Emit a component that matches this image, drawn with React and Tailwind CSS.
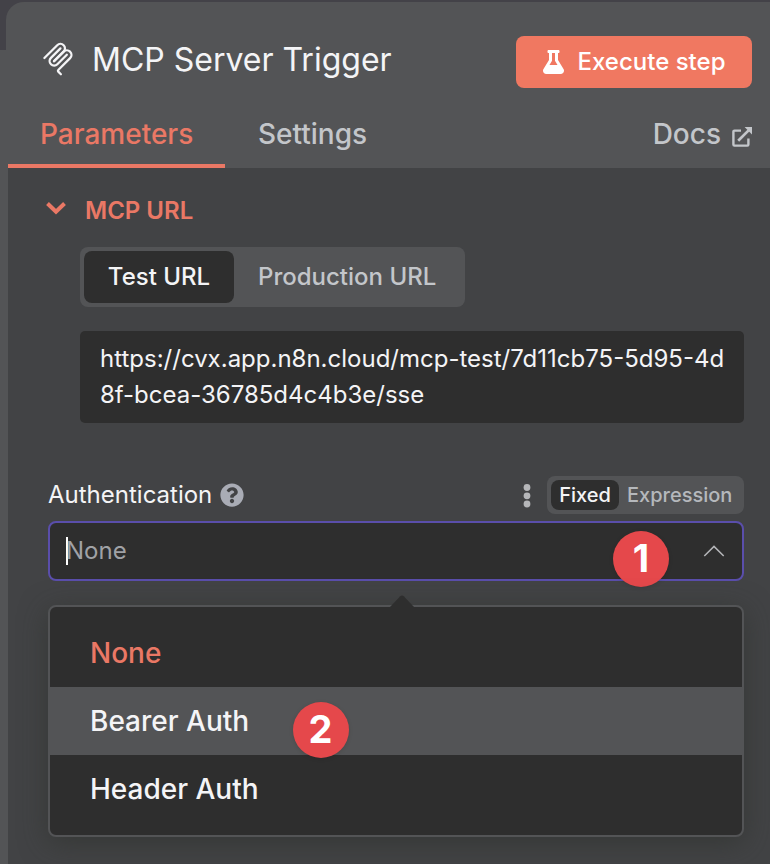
import React from "react";
import { FaFlask, FaQuestionCircle } from "react-icons/fa";

function McpIcon() {
  return (
    <svg viewBox="0 0 180 180" className="h-[34px] w-[34px] shrink-0" fill="none" stroke="#f4f4f6" strokeWidth="12" strokeLinecap="round">
      <path d="M18 84.85L85.88 16.97C95.25 7.6 110.45 7.6 119.82 16.97C129.2 26.34 129.2 41.54 119.82 50.91L68.56 102.18" />
      <path d="M69.27 101.47L119.82 50.91C129.2 41.54 144.39 41.54 153.77 50.91L154.12 51.27C163.49 60.64 163.49 75.83 154.12 85.21L92.72 146.6C89.6 149.72 89.6 154.79 92.72 157.91L105.33 170.52" />
      <path d="M102.85 33.94L52.65 84.15C43.28 93.52 43.28 108.71 52.65 118.09C62.02 127.46 77.22 127.46 86.59 118.09L136.79 67.88" />
    </svg>
  );
}

function ExternalLinkIcon() {
  return (
    <svg viewBox="0 0 20 20" className="mt-[5px] h-5 w-5 shrink-0" fill="none" stroke="#c3c6ca" strokeWidth="2.4">
      <path d="M9 3.6H2.4a1 1 0 0 0-1 1v13a1 1 0 0 0 1 1h13a1 1 0 0 0 1-1V11.5" />
      <path d="M6.2 13.8L16.6 3.4" strokeWidth="2.7" />
      <path d="M12.6 0H20V7.4Z" fill="#c3c6ca" stroke="none" />
    </svg>
  );
}

function Badge({ children, className }) {
  return (
    <div className={`absolute flex h-14 w-14 items-center justify-center rounded-full bg-[#e5484b] pb-[2px] text-[38px] leading-none font-bold text-white shadow-[0_1px_4px_rgba(0,0,0,0.12)] ${className}`}>
      {children}
    </div>
  );
}

export default function App() {
  return (
    <div className="flex h-[864px] w-[770px] flex-col overflow-hidden bg-[linear-gradient(to_bottom,#434248_50px,#535456_50px)] pt-[2px] font-['Inter',sans-serif] text-[#f4f4f6]">
      <header className="ml-[6px] flex h-[166px] shrink-0 flex-col rounded-tl-[18px] bg-[#535456]">
        <div className="flex h-[114px] items-center pr-[18px] pl-[35px]">
          <McpIcon />
          <h1 className="mt-[2px] ml-[17px] text-[32px] leading-none font-normal">MCP Server Trigger</h1>
          <button className="mt-[6px] ml-auto flex h-[52px] w-[236px] items-center justify-center gap-[14px] rounded-lg bg-[#f07861] text-2xl font-medium text-white">
            <FaFlask className="h-6 w-[21px]" />
            Execute step
          </button>
        </div>
        <nav className="ml-[2px] flex h-[52px] pr-[18px] text-[28px] leading-9 font-medium">
          <div className="w-[217px] border-b-4 border-[#ea7865] pl-8 text-[#ea7865]">Parameters</div>
          <div className="pl-[33px] text-[#c3c6ca]">Settings</div>
          <div className="ml-auto flex items-center gap-[11px] self-start text-[#c3c6ca]">
            Docs
            <ExternalLinkIcon />
          </div>
        </nav>
      </header>

      <main className="ml-2 flex flex-1 flex-col bg-[#424345] pt-[26px] pr-[26px] pl-10">
        <div className="flex h-[34px] items-center text-[#ea7865]">
          <svg viewBox="0 0 20 14" className="mb-[7px] -ml-[2px] h-[14px] w-5" fill="none" stroke="#ea7865" strokeWidth="4">
            <path d="M1.5 2.5L10 10.8L18.5 2.5" />
          </svg>
          <span className="ml-[19px] text-2xl font-semibold">MCP URL</span>
        </div>
        <div className="mt-[19px] ml-8 flex h-[60px] w-[385px] rounded-lg bg-[#535456] p-1 text-2xl font-medium">
          <div className="flex w-[150px] items-center justify-center rounded-lg bg-[#2e2e2e]">Test URL</div>
          <div className="flex flex-1 items-center pl-6 text-[#c3c6ca]">Production URL</div>
        </div>
        <div className="mt-6 ml-8 h-[92px] rounded-[5px] bg-[#2e2e2e] pt-[10px] pl-5 text-2xl leading-9">
          https://cvx.app.n8n.cloud/mcp-test/7d11cb75-5d95-4d
          <br />
          8f-bcea-36785d4c4b3e/sse
        </div>

        <div className="mt-[53px] flex h-[38px] items-center">
          <span className="text-2xl">Authentication</span>
          <FaQuestionCircle className="ml-2 h-6 w-6 text-[#a9acb5]" />
          <svg viewBox="0 0 8 26" className="mt-[2px] ml-auto h-[26px] w-2" fill="#b5b6b9">
            <circle cx="4" cy="4.5" r="3.4" />
            <circle cx="4" cy="12.8" r="3.4" />
            <circle cx="4" cy="21" r="3.4" />
          </svg>
          <div className="ml-4 flex h-[38px] w-[197px] rounded-lg bg-[#535456] p-1 text-xl leading-[30px] font-medium">
            <div className="w-[68px] rounded-lg bg-[#2e2e2e] text-center">Fixed</div>
            <div className="pl-2 text-[#b5b8bc]">Expression</div>
          </div>
        </div>

        <div className="relative mt-[7px] flex h-[60px] items-center rounded-lg border-2 border-[#5a4eab] bg-[#2e2e2e] pr-[17px] pl-4 text-2xl text-[#a0a2a6]">
          <span className="h-7 w-[2px] bg-white" />
          <span className="-ml-[2px]">None</span>
          <svg viewBox="0 0 22 12" className="ml-auto h-3 w-[22px]" fill="none" stroke="#b5b6b9" strokeWidth="1.5">
            <path d="M1.3 11L11 1.4L20.7 11" />
          </svg>
          <Badge className="top-2 left-[563px]">1</Badge>
        </div>

        <div className="relative mt-6 flex h-[232px] flex-col rounded-lg border-2 border-[#535456] bg-[#2e2e2e] pt-3 text-[28px] leading-[68px] font-medium shadow-[0_6px_28px_rgba(45,48,44,0.6)]">
          <svg viewBox="0 0 24 12" className="absolute -top-[12px] left-[340px] h-3 w-6" fill="#2e2e2e">
            <path d="M0 12L10.3 1.2Q12 -0.4 13.7 1.2L24 12Z" />
          </svg>
          <div className="h-[68px] pl-10 text-[#ea7865]">None</div>
          <div className="relative h-[68px] bg-[#535456] pl-10">
            Bearer Auth
            <Badge className="top-[14.5px] left-[242.5px]">2</Badge>
          </div>
          <div className="h-[68px] pl-10">Header Auth</div>
        </div>
      </main>
    </div>
  );
}
